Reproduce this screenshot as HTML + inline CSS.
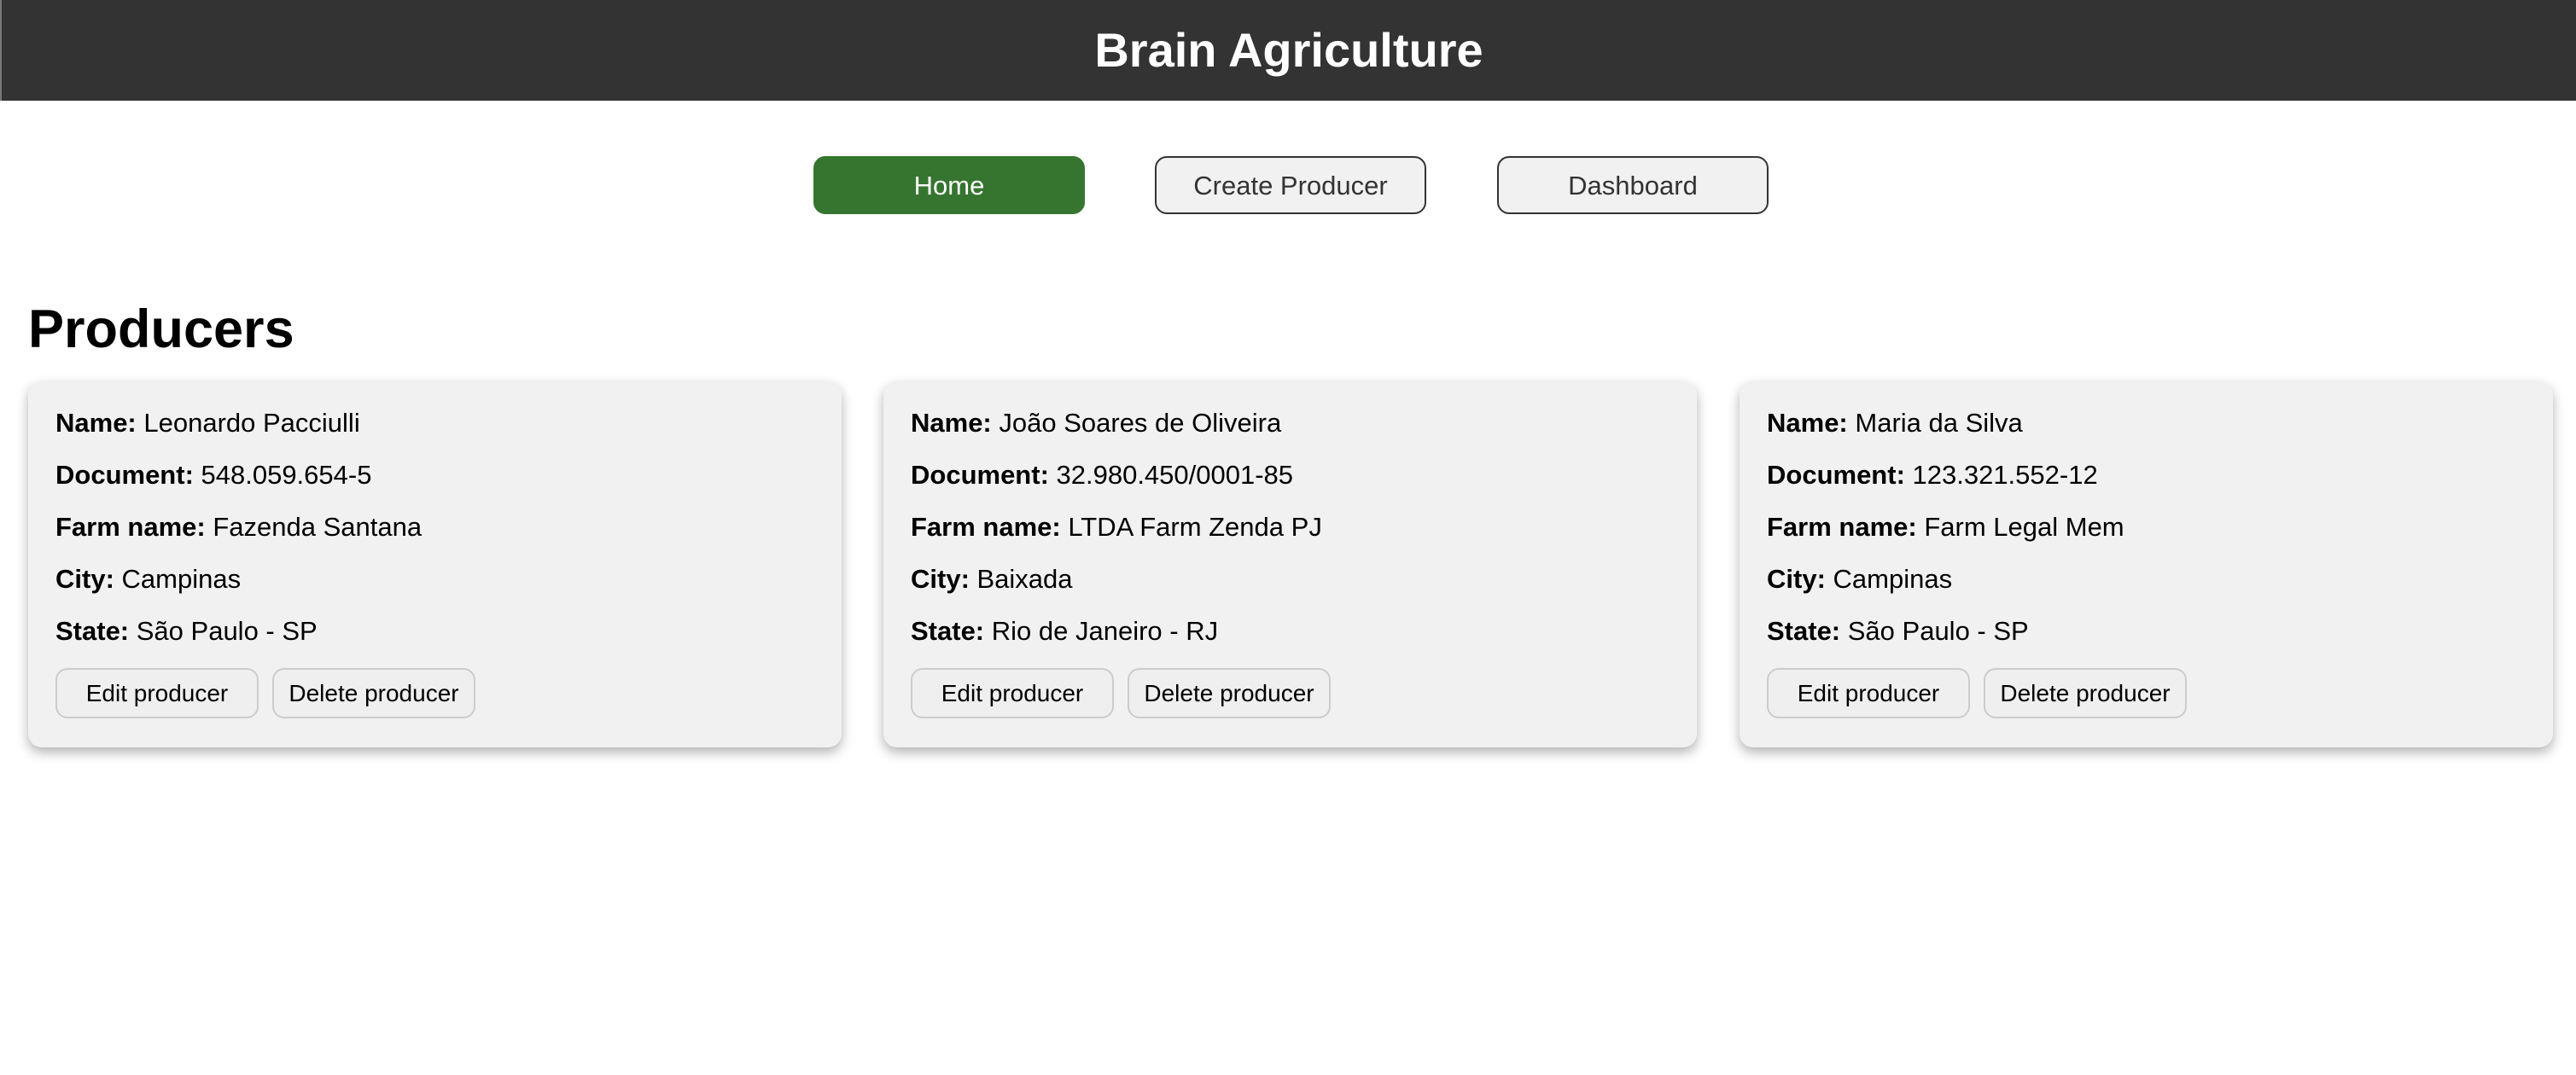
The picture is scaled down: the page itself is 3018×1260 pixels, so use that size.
<!DOCTYPE html>
<html><head><meta charset="utf-8"><style>
*{box-sizing:border-box;margin:0;padding:0}
body{width:3018px;height:1260px;background:#fff;font-family:"Liberation Sans",Arial,sans-serif;position:relative;overflow:hidden;color:#000}
.hdr{position:absolute;left:0;top:0;width:3018px;height:118px;background:#333;border-left:2px solid #777}
.hdr h1{color:#fff;font-size:56px;font-weight:bold;text-align:center;line-height:118px}
.nav{position:absolute;top:183px;width:318px;height:68px;border-radius:14px;font-size:31px;text-align:center;line-height:66px;color:#333;background:#f1f1f1;border:2px solid #333}
.nav.home{background:#36752f;color:#fff;border-color:#36752f}
h2{position:absolute;left:33px;top:350px;font-size:63px;font-weight:bold}
.card{position:absolute;top:447px;width:953px;height:429px;background:#f1f1f1;border-radius:16px;box-shadow:0 6px 14px rgba(0,0,0,.3);padding:29px 32px 0}
.card p{font-size:31px;height:61px;line-height:40px}
.btn{display:inline-block;height:59px;width:238px;margin-right:16px;margin-top:2px;border:2px solid #ccc;border-radius:14px;background:#efefef;font-size:28px;text-align:center;line-height:55px}
</style></head><body>
<div class="hdr"><h1>Brain Agriculture</h1></div>
<div class="nav home" style="left:953px">Home</div>
<div class="nav" style="left:1353px">Create Producer</div>
<div class="nav" style="left:1754px">Dashboard</div>
<h2>Producers</h2>
<div class="card" style="left:33px">
<p><b>Name:</b> Leonardo Pacciulli</p>
<p><b>Document:</b> 548.059.654-5</p>
<p><b>Farm name:</b> Fazenda Santana</p>
<p><b>City:</b> Campinas</p>
<p><b>State:</b> São Paulo - SP</p>
<span class="btn">Edit producer</span><span class="btn">Delete producer</span>
</div>
<div class="card" style="left:1035px">
<p><b>Name:</b> João Soares de Oliveira</p>
<p><b>Document:</b> 32.980.450/0001-85</p>
<p><b>Farm name:</b> LTDA Farm Zenda PJ</p>
<p><b>City:</b> Baixada</p>
<p><b>State:</b> Rio de Janeiro - RJ</p>
<span class="btn">Edit producer</span><span class="btn">Delete producer</span>
</div>
<div class="card" style="left:2038px">
<p><b>Name:</b> Maria da Silva</p>
<p><b>Document:</b> 123.321.552-12</p>
<p><b>Farm name:</b> Farm Legal Mem</p>
<p><b>City:</b> Campinas</p>
<p><b>State:</b> São Paulo - SP</p>
<span class="btn">Edit producer</span><span class="btn">Delete producer</span>
</div>
</body></html>
